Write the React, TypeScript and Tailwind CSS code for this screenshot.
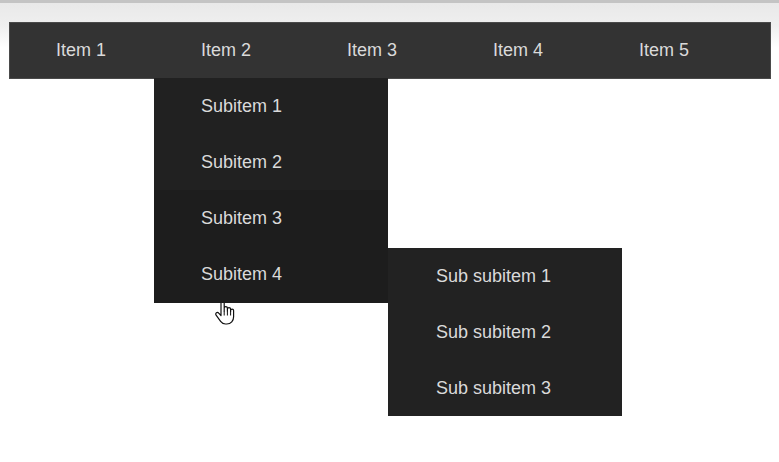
import React from "react";

const items = ["Item 1", "Item 2", "Item 3", "Item 4", "Item 5"];
const subs = ["Subitem 1", "Subitem 2", "Subitem 3", "Subitem 4"];
const subsubs = ["Sub subitem 1", "Sub subitem 2", "Sub subitem 3"];

function HandCursor() {
  return (
    <svg width="24" height="28" viewBox="0 0 24 28" className="absolute left-[214px] top-[299px] pointer-events-none">
      <path
        d="M7 2.5c0-1 .7-1.7 1.6-1.7s1.6.7 1.6 1.7V12V9.2c0-.9.7-1.6 1.6-1.6s1.6.7 1.6 1.6V12v-1.8c0-.9.7-1.6 1.6-1.6s1.6.7 1.6 1.6V12.5v-.9c0-.9.7-1.5 1.5-1.5s1.5.6 1.5 1.5v6.2c0 4-2.6 7.2-6.8 7.2h-1.3c-2.2 0-3.6-.8-4.9-2.6l-4.5-6.3c-.6-.8-.4-1.8.3-2.3.7-.5 1.7-.4 2.3.4L7 16.5V2.5z"
        fill="#fff"
        stroke="#111"
        strokeWidth="1.2"
        strokeLinejoin="round"
      />
      <path d="M10.2 12v4.5M13.4 12v4.5M16.6 12.5v4" stroke="#111" strokeWidth="1" />
    </svg>
  );
}

export default function App() {
  return (
    <div className="relative w-[779px] h-[462px] bg-white overflow-hidden" style={{ fontFamily: '"Liberation Sans", Arial, sans-serif' }}>
      <div className="h-[3px] bg-[#c4c4c4]" />
      <div className="bg-gradient-to-b from-[#e9e9e9] via-[#efefef] to-white h-[45px] absolute top-[3px] left-0 right-0" />
      <div className="relative pt-[19px] pl-[9px] pr-[8px]">
        <ul className="flex h-[57px] bg-[#333333] border border-[#4a4a4a]">
          {items.map((it, i) => (
            <li
              key={it}
              className={`relative h-full flex items-center pl-[46px] text-[18px] text-[#dadada] ${i === 0 ? "w-[145px]" : "w-[146px]"}`}
            >
              {it}
              {i === 1 && (
                <ul className="absolute top-full left-[-1px] w-[234px] bg-[#212121] z-10">
                  {subs.map((s, j) => (
                    <li
                      key={s}
                      className={`relative flex items-center pl-[47px] text-[18px] text-[#dadada] ${j >= 2 ? "bg-[#1d1d1d]" : ""} ${j === 3 ? "h-[57px]" : "h-[56px]"}`}
                    >
                      {s}
                      {j === 3 && (
                        <ul className="absolute left-full top-[2px] w-[234px] bg-[#222222]">
                          {subsubs.map((ss) => (
                            <li key={ss} className="h-[56px] flex items-center pl-[48px] text-[18px] text-[#dadada]">
                              {ss}
                            </li>
                          ))}
                        </ul>
                      )}
                    </li>
                  ))}
                </ul>
              )}
            </li>
          ))}
        </ul>
      </div>
      <HandCursor />
    </div>
  );
}
